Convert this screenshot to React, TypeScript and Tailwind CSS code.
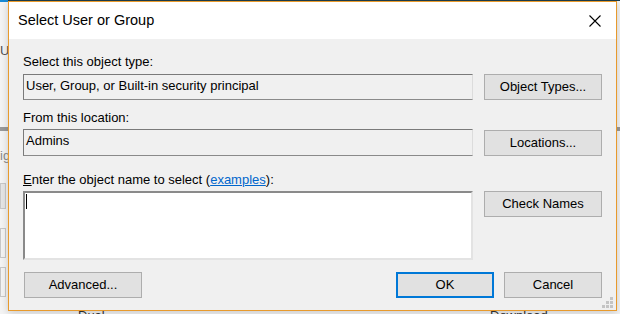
import React from "react";

const font = { fontFamily: '"Liberation Sans", Arial, sans-serif' };

function Btn({ children, w, primary }: { children: React.ReactNode; w: string; primary?: boolean }) {
  return (
    <div
      className={
        "flex items-center justify-center bg-[#e1e1e1] text-[13px] text-black " +
        w +
        (primary ? " border-2 border-[#0078d7] h-[26px]" : " border border-[#adadad] h-[26px]")
      }
    >
      {children}
    </div>
  );
}

export default function App() {
  return (
    <div className="relative w-[620px] h-[314px] overflow-hidden bg-[#f4f4f4]" style={font}>
      {/* background window hints */}
      <div className="absolute left-0 top-0 w-[620px] h-[1px] bg-[#1c3d4c]" />
      <div className="absolute left-0 top-0 w-[8px] h-[2px] bg-[#1a8ad4]" />
      <div className="absolute left-[0px] top-[43px] text-[13px] leading-[15px] text-[#555]">Us</div>
      <div className="absolute left-0 top-[127px] w-[8px] h-[4px] bg-[#9a9a9a]" />
      <div className="absolute left-0 top-[148px] text-[13px] leading-[15px] text-[#888]">ig</div>
      <div className="absolute left-0 top-[183px] w-[6px] h-[26px] border border-[#c8c8c8] bg-[#e6e6e6]" />
      <div className="absolute left-0 top-[228px] w-[6px] h-[30px] border border-[#c8c8c8]" />
      <div className="absolute left-0 top-[267px] w-[6px] h-[30px] border border-[#c8c8c8]" />
      <div className="absolute left-[616px] top-[127px] w-[6px] h-[4px] bg-[#9a9a9a]" />
      <div className="absolute left-[78px] top-[308px] text-[13px] leading-[15px] text-[#333]">Dual</div>
      <div className="absolute left-[490px] top-[308px] text-[13px] leading-[15px] text-[#333]">Download</div>

      {/* dialog */}
      <div className="absolute left-[8px] top-[1px] w-[609px] h-[310px] border border-[#e89a2c] bg-[#f0f0f0] flex flex-col shadow-[0_2px_8px_rgba(0,0,0,0.18)]">
        <div className="h-[37px] bg-white flex items-center justify-between pl-[9px] pr-[15px] shrink-0">
          <span className="text-[14.5px] text-black">Select User or Group</span>
          <svg width="12" height="12" viewBox="0 0 12 12">
            <path d="M0.5 0.5 L11.5 11.5 M11.5 0.5 L0.5 11.5" stroke="#000" strokeWidth="1.1" />
          </svg>
        </div>
        <div className="relative flex-1 flex flex-col px-[14px] pt-[15px] text-[13px] text-black">
          <div className="h-[15px] leading-[15px]">Select this object type:</div>
          <div className="flex items-start justify-between mt-[5px]">
            <div className="w-[450px] h-[26px] border border-t-[#7a7a7a] border-l-[#7a7a7a] border-b-[#8a8a8a] border-r-[#dcdcdc] bg-[#f0f0f0] leading-[15px] pt-[3px] pl-[2px]">
              User, Group, or Built-in security principal
            </div>
            <Btn w="w-[118px]">Object Types...</Btn>
          </div>
          <div className="h-[15px] leading-[15px] mt-[10px]">From this location:</div>
          <div className="flex items-start justify-between mt-[4px]">
            <div className="w-[450px] h-[27px] border border-t-[#7a7a7a] border-l-[#7a7a7a] border-b-[#8a8a8a] border-r-[#dcdcdc] bg-[#f0f0f0] leading-[15px] pt-[3px] pl-[2px]">
              Admins
            </div>
            <div className="mt-[1px]">
              <Btn w="w-[118px]">Locations...</Btn>
            </div>
          </div>
          <div className="h-[15px] leading-[15px] mt-[16px]">
            <span className="underline">E</span>nter the object name to select (
            <span className="text-[#0066cc] underline">examples</span>):
          </div>
          <div className="flex items-start justify-between mt-[4px]">
            <div className="w-[450px] h-[69px] bg-white border-2 border-t-[#8a8a8a] border-l-[#8a8a8a] border-b-[#e3e3e3] border-r-[#e3e3e3] pl-[1px] pt-[1px]">
              <div className="w-[1px] h-[15px] bg-black" />
            </div>
            <Btn w="w-[118px]">Check Names</Btn>
          </div>
          <div className="flex items-center justify-between mt-[12px] pl-[1px]">
            <Btn w="w-[118px]">Advanced...</Btn>
            <div className="flex gap-[10px]">
              <Btn w="w-[98px]" primary>OK</Btn>
              <Btn w="w-[98px]">Cancel</Btn>
            </div>
          </div>
          <svg className="absolute right-[3px] bottom-[2px]" width="11" height="11" viewBox="0 0 11 11">
            <rect x="8" y="0" width="3" height="3" fill="#c4c4c4" />
            <rect x="4" y="4" width="3" height="3" fill="#c4c4c4" />
            <rect x="8" y="4" width="3" height="3" fill="#c4c4c4" />
            <rect x="0" y="8" width="3" height="3" fill="#c4c4c4" />
            <rect x="4" y="8" width="3" height="3" fill="#c4c4c4" />
            <rect x="8" y="8" width="3" height="3" fill="#c4c4c4" />
          </svg>
        </div>
      </div>
    </div>
  );
}
